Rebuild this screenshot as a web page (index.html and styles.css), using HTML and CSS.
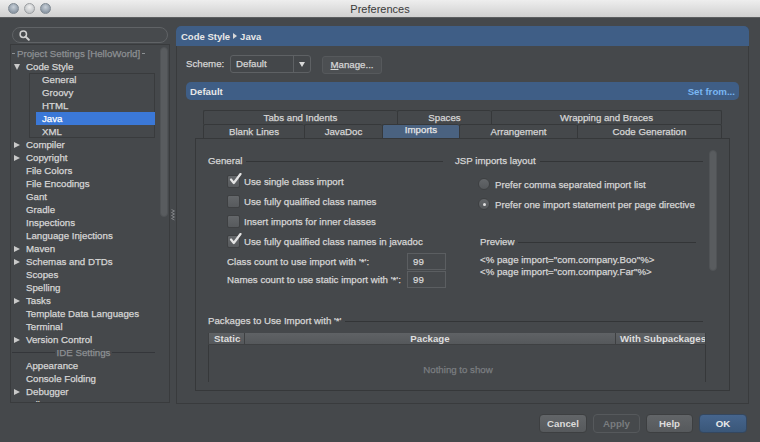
FILE: index.html
```html
<!DOCTYPE html>
<html>
<head>
<meta charset="utf-8">
<title>Preferences</title>
<link rel="stylesheet" href="styles.css">
</head>
<body>
<div class="window">
  <div class="titlebar">
    <div class="lights"><span class="light dark"></span><span class="light pale"></span><span class="light dark"></span></div>
    <div class="title">Preferences</div>
    <div></div>
  </div>

  <div class="main">
    <div class="left">
      <div class="search">
        <svg class="mag" width="11" height="11" viewBox="0 0 11 11"><circle cx="4.3" cy="4.3" r="3.2" fill="none" stroke="#d0d0d0" stroke-width="1.5"/><path d="M6.6 6.6 L9.8 9.8" stroke="#d0d0d0" stroke-width="2" stroke-linecap="round"/></svg>
      </div>
      <div class="tree">
        <div class="tree-list">
          <div class="row group-title"><span class="dash"></span><span>Project Settings [HelloWorld]</span><span class="dash"></span></div>
          <div class="row"><span class="arrow"><span class="tri-down"></span></span>Code Style</div>
          <div class="children">
            <div class="row child">General</div>
            <div class="row child">Groovy</div>
            <div class="row child">HTML</div>
            <div class="row child selected">Java</div>
            <div class="row child">XML</div>
          </div>
          <div class="row"><span class="arrow"><span class="tri-right"></span></span>Compiler</div>
          <div class="row"><span class="arrow"><span class="tri-right"></span></span>Copyright</div>
          <div class="row"><span class="arrow"></span>File Colors</div>
          <div class="row"><span class="arrow"></span>File Encodings</div>
          <div class="row"><span class="arrow"></span>Gant</div>
          <div class="row"><span class="arrow"></span>Gradle</div>
          <div class="row"><span class="arrow"></span>Inspections</div>
          <div class="row"><span class="arrow"></span>Language Injections</div>
          <div class="row"><span class="arrow"><span class="tri-right"></span></span>Maven</div>
          <div class="row"><span class="arrow"><span class="tri-right"></span></span>Schemas and DTDs</div>
          <div class="row"><span class="arrow"></span>Scopes</div>
          <div class="row"><span class="arrow"></span>Spelling</div>
          <div class="row"><span class="arrow"><span class="tri-right"></span></span>Tasks</div>
          <div class="row"><span class="arrow"></span>Template Data Languages</div>
          <div class="row"><span class="arrow"></span>Terminal</div>
          <div class="row"><span class="arrow"><span class="tri-right"></span></span>Version Control</div>
          <div class="row ide-title"><span class="rule"></span><span>IDE Settings</span><span class="rule"></span></div>
          <div class="row"><span class="arrow"></span>Appearance</div>
          <div class="row"><span class="arrow"></span>Console Folding</div>
          <div class="row"><span class="arrow"><span class="tri-right"></span></span>Debugger</div>
          <div class="row"><span class="arrow"></span>Editor</div>
        </div>
        <div class="tree-scroll"></div>
      </div>
    </div>

    <div class="splitter">
      <svg width="4" height="12" viewBox="0 0 4 12"><polyline points="0.5,0.5 3.5,2 0.5,3.5 3.5,5 0.5,6.5 3.5,8 0.5,9.5 3.5,11" fill="none" stroke="#8a8d90" stroke-width="0.8"/></svg>
    </div>

    <div class="right">
      <div class="crumb">Code Style<span class="crumb-tri"></span>Java</div>

      <div class="scheme-row">
        <span class="scheme-label">Scheme:</span>
        <div class="combo"><span class="combo-text">Default</span><span class="combo-btn"><span class="tri-small"></span></span></div>
        <div class="manage"><u>M</u>anage...</div>
      </div>

      <div class="default-bar"><span>Default</span><span class="set-from">Set from...</span></div>

      <div class="tabs">
        <div class="tab-row row1">
          <div class="tab">Tabs and Indents</div>
          <div class="tab">Spaces</div>
          <div class="tab last">Wrapping and Braces</div>
        </div>
        <div class="tab-row row2">
          <div class="tab">Blank Lines</div>
          <div class="tab">JavaDoc</div>
          <div class="tab active">Imports</div>
          <div class="tab">Arrangement</div>
          <div class="tab last">Code Generation</div>
        </div>
      </div>

      <div class="content">
        <div class="content-main">
          <div class="top-grid">
            <div class="col">
              <div class="sec-head"><span>General</span><span class="sec-line"></span></div>
              <div class="checks">
                <div class="check-row"><span class="cb"><svg class="tick" width="14" height="14" viewBox="0 0 14 14"><path d="M3 6.5 L5.8 10 L12.5 1" fill="none" stroke="#e4e4e4" stroke-width="2.2" stroke-linecap="round" stroke-linejoin="round"/></svg></span><span>Use single class import</span></div>
                <div class="check-row"><span class="cb"></span><span>Use fully qualified class names</span></div>
                <div class="check-row"><span class="cb"></span><span>Insert imports for inner classes</span></div>
                <div class="check-row"><span class="cb"><svg class="tick" width="14" height="14" viewBox="0 0 14 14"><path d="M3 6.5 L5.8 10 L12.5 1" fill="none" stroke="#e4e4e4" stroke-width="2.2" stroke-linecap="round" stroke-linejoin="round"/></svg></span><span>Use fully qualified class names in javadoc</span></div>
              </div>
              <div class="counts">
                <span class="count-label">Class count to use import with '*':</span><span class="field">99</span>
                <span class="count-label">Names count to use static import with '*':</span><span class="field">99</span>
              </div>
            </div>
            <div class="col">
              <div class="sec-head"><span>JSP imports layout</span><span class="sec-line"></span></div>
              <div class="radios">
                <div class="radio-row"><span class="radio"></span><span>Prefer comma separated import list</span></div>
                <div class="radio-row"><span class="radio on"></span><span>Prefer one import statement per page directive</span></div>
              </div>
              <div class="sec-head preview-head"><span>Preview</span><span class="sec-line"></span></div>
              <div class="preview">
                <div>&lt;% page import="com.company.Boo"%&gt;</div>
                <div>&lt;% page import="com.company.Far"%&gt;</div>
              </div>
            </div>
          </div>

          <div class="sec-head pkg-head"><span>Packages to Use Import with '*'</span><span class="sec-line"></span></div>
          <div class="table">
            <div class="thead">
              <div class="th th-static">Static</div>
              <div class="th th-package">Package</div>
              <div class="th th-sub">With Subpackages</div>
            </div>
            <div class="tbody"><span class="empty">Nothing to show</span></div>
          </div>
        </div>
        <div class="content-scroll"></div>
      </div>
    </div>
  </div>

  <div class="footer">
    <div class="btn">Cancel</div>
    <div class="btn disabled">Apply</div>
    <div class="btn">Help</div>
    <div class="btn primary">OK</div>
  </div>
</div>
</body>
</html>
```

FILE: styles.css
```css
* { box-sizing: border-box; }
html, body { margin: 0; padding: 0; }
body {
  width: 760px;
  height: 442px;
  overflow: hidden;
  background: #45484b;
  font-family: "Liberation Sans", Arial, sans-serif;
  font-size: 9.7px;
  color: #d6d6d6;
  -webkit-text-stroke: 0.25px currentColor;
}
.window {
  width: 760px;
  height: 442px;
  display: flex;
  flex-direction: column;
  background: #45484b;
  overflow: hidden;
}

/* title bar */
.titlebar {
  flex: 0 0 18px;
  height: 18px;
  background: linear-gradient(#eeeeee, #d0d0d0);
  border-bottom: 1px solid #5c5e60;
  display: grid;
  grid-template-columns: 1fr auto 1fr;
  align-items: center;
  -webkit-text-stroke: 0;
}
.lights { display: flex; gap: 5px; padding-left: 8px; }
.light {
  width: 11px; height: 11px; border-radius: 50%;
  border: 1px solid #7f8992;
}
.light.dark { background: radial-gradient(circle at 50% 35%, #c8d0d8, #8d99a6 70%); }
.light.pale { background: radial-gradient(circle at 50% 35%, #f0f0f0, #c3c6c9 70%); border-color: #9b9ea1; }
.title { font-size: 11px; color: #3a3a3a; }

/* main */
.main {
  flex: 0 0 386px;
  height: 386px;
  min-height: 0;
  overflow: hidden;
  display: flex;
  padding: 8px 11px 0 10px;
}
.left {
  width: 160px;
  height: 378px;
  min-height: 0;
  display: flex;
  flex-direction: column;
  padding-bottom: 1px;
}
.search {
  height: 16px;
  flex: 0 0 16px;
  margin: 1px 2px;
  border: 1px solid #606366;
  border-radius: 8px;
  background: #474a4d;
  display: flex;
  align-items: center;
  padding-left: 6px;
}
.tree {
  flex: 1 1 0;
  min-height: 0;
  border: 1px solid #393b3d;
  display: flex;
  overflow: hidden;
}
.tree-list {
  flex: 1;
  padding-top: 2px;
}
.row {
  height: 13px;
  line-height: 13px;
  display: flex;
  align-items: center;
  white-space: nowrap;
  padding-left: 2px;
}
.arrow {
  width: 13px;
  height: 13px;
  display: flex;
  align-items: center;
  padding-left: 1px;
}
.tri-right {
  width: 0; height: 0;
  border-top: 3.5px solid transparent;
  border-bottom: 3.5px solid transparent;
  border-left: 6px solid #c9c9c9;
}
.tri-down {
  width: 0; height: 0;
  border-left: 3.5px solid transparent;
  border-right: 3.5px solid transparent;
  border-top: 6px solid #c9c9c9;
}
.group-title { color: #8d9093; padding-left: 1px; gap: 2px; }
.dash { width: 3px; height: 1px; background: #8d9093; }
.children {
  margin-left: 18px;
  width: 126px;
  box-shadow: inset 0 0 0 1px #393b3d;
}
.row.child { padding-left: 13px; }
.row.child.selected {
  margin-left: 7px;
  padding-left: 6px;
  background: #3b78d7;
  color: #ffffff;
}
.ide-title { color: #8d9093; padding-left: 1px; gap: 2px; }
.rule { flex: 1; height: 1px; background: #34363a; }
.ide-title .rule:last-child { margin-right: 3px; }
.tree-scroll {
  width: 8px;
  height: 170px;
  margin: 2px 1px 0 2px;
  border-radius: 4px;
  background: #595c5f;
  border: 1px solid #505356;
}
.splitter {
  width: 6px;
  display: flex;
  align-items: flex-start;
  justify-content: center;
  padding-top: 183px;
}

/* right */
.right {
  width: 573px;
  height: 378px;
  border: 1px solid #393b3d;
  border-top: none;
  border-radius: 5px 5px 0 0;
  display: flex;
  flex-direction: column;
}
.crumb {
  height: 20px;
  flex: 0 0 20px;
  background: #3f5e86;
  border-radius: 5px 5px 0 0;
  margin: 0 -1px;
  padding-left: 5px;
  display: flex;
  align-items: center;
  font-weight: bold;
  font-size: 9.5px;
  color: #e8e8e8;
  -webkit-text-stroke: 0;
}
.crumb-tri {
  width: 0; height: 0;
  border-top: 3px solid transparent;
  border-bottom: 3px solid transparent;
  border-left: 4px solid #d8d8d8;
  margin: 0 3px;
}
.scheme-row {
  margin: 9px 0 0 9px;
  height: 19px;
  display: flex;
  align-items: flex-start;
}
.scheme-label { line-height: 18px; width: 44px; }
.combo {
  width: 81px;
  height: 18px;
  border: 1px solid #5e6164;
  border-radius: 3px;
  display: flex;
  background: #44474a;
}
.combo-text { flex: 1; line-height: 16px; padding-left: 5px; }
.combo-btn {
  width: 17px;
  border-left: 1px solid #5e6164;
  display: flex;
  align-items: center;
  justify-content: center;
}
.tri-small {
  width: 0; height: 0;
  border-left: 3.5px solid transparent;
  border-right: 3.5px solid transparent;
  border-top: 5px solid #d8d8d8;
}
.manage {
  margin: 1px 0 0 11px;
  width: 60px;
  height: 18px;
  line-height: 16px;
  text-align: center;
  background: #4c4f52;
  border: 1px solid #56595c;
  border-radius: 3px;
}
.default-bar {
  margin: 8px 9px 0 9px;
  height: 18px;
  background: #3f5e86;
  border-radius: 5px;
  display: flex;
  align-items: center;
  justify-content: space-between;
  padding: 0 4px;
  font-weight: bold;
  color: #e8e8e8;
  -webkit-text-stroke: 0;
}
.set-from { color: #7ab6f2; }

.tabs { margin: 10px 26px 0 26px; }
.tab-row { display: grid; height: 14px; }
.row1 { grid-template-columns: 194px 94px 1fr; }
.row2 { grid-template-columns: 101px 78px 77px 118px 1fr; }
.tab {
  border: 1px solid #36383a;
  border-right: none;
  border-bottom: none;
  border-radius: 2px 2px 0 0;
  text-align: center;
  line-height: 13px;
  color: #d6d6d6;
}
.tab.last { border-right: 1px solid #36383a; }
.tab.active {
  background: #4a6280;
  line-height: 9px;
  color: #e6e6e6;
}

.content {
  margin: 0 18px 0 18px;
  height: 253px;
  border: 1px solid #36383a;
  display: flex;
  overflow: hidden;
}
.content-main {
  width: 507px;
  padding: 15px 0 0 12px;
}
.content-scroll {
  width: 8px;
  height: 121px;
  margin: 11px 0 0 6px;
  border-radius: 4px;
  background: #595c5f;
  border: 1px solid #505356;
}
.top-grid {
  display: grid;
  grid-template-columns: 235px 248px;
  column-gap: 12px;
}
.sec-head {
  height: 13px;
  display: flex;
  align-items: center;
  white-space: nowrap;
}
.sec-line {
  flex: 1;
  height: 1px;
  margin: 2px 0 0 4px;
  background: #333537;
}
.checks { margin-top: 4px; }
.check-row {
  height: 20px;
  display: flex;
  align-items: center;
  padding-left: 19px;
  gap: 4px;
}
.cb {
  width: 13px;
  height: 13px;
  border-radius: 2px;
  background: linear-gradient(#64676a, #575a5d);
  border: 1px solid #3e4042;
  position: relative;
}
.tick { position: absolute; left: 0; top: -3px; }
.counts {
  margin: 2px 0 0 19px;
  display: grid;
  grid-template-columns: 180px 39px;
  grid-auto-rows: 17px;
  row-gap: 1px;
  align-items: center;
}
.count-label { white-space: nowrap; }
.field {
  height: 17px;
  line-height: 15px;
  border: 1px solid #5b5e61;
  background: #46494c;
  padding-left: 5px;
}
.radios { margin-top: 7px; }
.radio-row {
  height: 20px;
  display: flex;
  align-items: center;
  padding-left: 23px;
  gap: 5px;
  white-space: nowrap;
}
.radio {
  width: 12px;
  height: 12px;
  border-radius: 50%;
  background: linear-gradient(#64676a, #55585b);
  border: 1px solid #3e4042;
  display: flex;
  align-items: center;
  justify-content: center;
}
.radio.on::after {
  content: "";
  width: 3px;
  height: 3px;
  border-radius: 50%;
  background: #e0e0e0;
}
.preview-head { margin: 21px 7px 0 25px; }
.preview {
  margin: 6px 0 0 25px;
  line-height: 12px;
  white-space: nowrap;
}
.pkg-head { margin-top: 26px; width: 495px; }
.table {
  margin-top: 6px;
  width: 498px;
}
.thead {
  height: 12px;
  display: grid;
  grid-template-columns: 36px 371px 1fr;
  background: linear-gradient(#5f6265, #55585b);
  border: 1px solid #3e4042;
  border-top: none;
  font-weight: bold;
  color: #dedede;
  line-height: 11px;
  -webkit-text-stroke: 0;
}
.th { white-space: nowrap; overflow: hidden; }
.th-static { padding-left: 5px; border-right: 1px solid #3e4042; }
.th-package { text-align: center; border-right: 1px solid #3e4042; }
.th-sub { padding-left: 4px; }
.tbody {
  height: 37px;
  border-left: 1px solid #36383a;
  border-right: 1px solid #36383a;
  display: flex;
  justify-content: center;
  padding-top: 19px;
  line-height: 12px;
}
.empty { color: #7b7e81; margin-left: 2px; }

/* footer */
.footer {
  flex: 1;
  display: flex;
  justify-content: flex-end;
  align-items: flex-start;
  padding: 10px 13px 0 0;
  gap: 6px;
}
.btn {
  width: 47px;
  height: 19px;
  line-height: 17px;
  text-align: center;
  border-radius: 4px;
  border: 1px solid #3d3f41;
  background: linear-gradient(#626568, #56595c);
  font-weight: bold;
  color: #dcdcdc;
  -webkit-text-stroke: 0;
}
.btn:first-child, .btn.primary { width: 48px; }
.btn.disabled {
  background: #46494c;
  border-color: #56595c;
  color: #797c7f;
}
.btn.primary {
  background: linear-gradient(#46658d, #3a5779);
  border-color: #34475f;
  color: #eaeaea;
}
```
